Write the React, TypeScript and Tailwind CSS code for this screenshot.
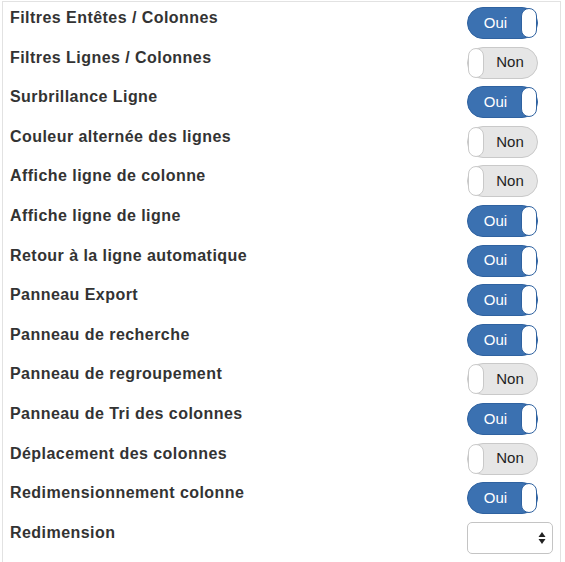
import React from 'react'

const rows: { label: string; on: boolean }[] = [
  { label: 'Filtres Entêtes / Colonnes', on: true },
  { label: 'Filtres Lignes / Colonnes', on: false },
  { label: 'Surbrillance Ligne', on: true },
  { label: 'Couleur alternée des lignes', on: false },
  { label: 'Affiche ligne de colonne', on: false },
  { label: 'Affiche ligne de ligne', on: true },
  { label: 'Retour à la ligne automatique', on: true },
  { label: 'Panneau Export', on: true },
  { label: 'Panneau de recherche', on: true },
  { label: 'Panneau de regroupement', on: false },
  { label: 'Panneau de Tri des colonnes', on: true },
  { label: 'Déplacement des colonnes', on: false },
  { label: 'Redimensionnement colonne', on: true },
]

function Toggle({ on }: { on: boolean }) {
  if (on) {
    return (
      <div className="flex h-[32px] w-[71px] items-stretch rounded-full border border-[#2f62a0] bg-[#3b71b1]">
        <span className="flex flex-1 items-center justify-center pl-[2px] text-[15px] text-white">Oui</span>
        <span className="w-[16px] rounded-full border border-[#2f62a0] bg-white" />
      </div>
    )
  }
  return (
    <div className="flex h-[32px] w-[71px] items-stretch rounded-full border border-[#c9c9c9] bg-[#e6e6e6]">
      <span className="w-[16px] rounded-full border border-[#c9c9c9] bg-white" />
      <span className="flex flex-1 items-center justify-center pr-[1px] text-[15px] text-[#222]">Non</span>
    </div>
  )
}

const labelCls = 'pt-[1px] text-[16px] font-bold leading-[20px] tracking-[0.45px] text-[#333]'

export default function App() {
  return (
    <div className="h-[562px] overflow-hidden bg-white" style={{ fontFamily: '"Liberation Sans", Arial, sans-serif' }}>
      <div className="ml-[2px] mt-[1px] h-[600px] w-[559px] border border-[#e2e2e2] pt-[5px] pl-[7px] pr-[7px]">
        {rows.map((r) => (
          <div key={r.label} className="flex h-[39.6px] items-start justify-between">
            <span className={labelCls}>{r.label}</span>
            <div className="w-[86px]">
              <Toggle on={r.on} />
            </div>
          </div>
        ))}
        <div className="flex h-[39.6px] items-start justify-between">
          <span className={labelCls}>Redimension</span>
          <div className="flex h-[32px] w-[86px] items-center justify-end rounded-[5px] border border-[#c4c4c4] bg-white pr-[6px]">
            <svg width="8" height="14" viewBox="0 0 8 14">
              <path d="M4 1 L7.5 6 H0.5 Z" fill="#222" />
              <path d="M4 13 L7.5 8 H0.5 Z" fill="#222" />
            </svg>
          </div>
        </div>
      </div>
    </div>
  )
}
